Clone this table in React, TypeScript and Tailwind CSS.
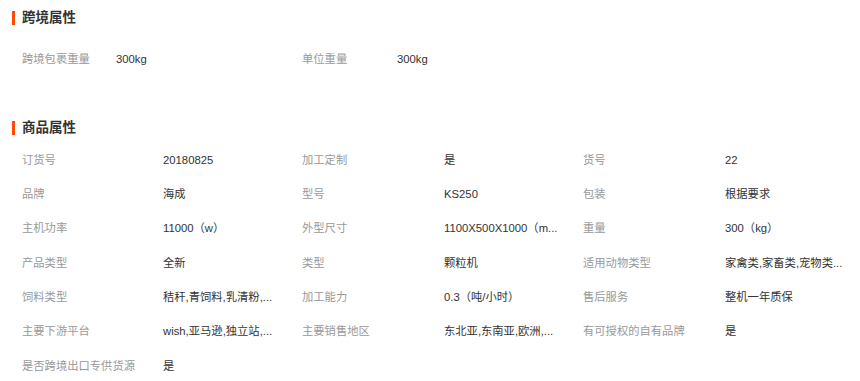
import React from 'react';

type Pair = [string, string];

const crossBorder: Pair[] = [
  ['跨境包裹重量', '300kg'],
  ['单位重量', '300kg'],
];

const attrs: Pair[] = [
  ['订货号', '20180825'],
  ['加工定制', '是'],
  ['货号', '22'],
  ['品牌', '海成'],
  ['型号', 'KS250'],
  ['包装', '根据要求'],
  ['主机功率', '11000（w）'],
  ['外型尺寸', '1100X500X1000（m...'],
  ['重量', '300（kg）'],
  ['产品类型', '全新'],
  ['类型', '颗粒机'],
  ['适用动物类型', '家禽类,家畜类,宠物类...'],
  ['饲料类型', '秸秆,青饲料,乳清粉,...'],
  ['加工能力', '0.3（吨/小时）'],
  ['售后服务', '整机一年质保'],
  ['主要下游平台', 'wish,亚马逊,独立站,...'],
  ['主要销售地区', '东北亚,东南亚,欧洲,...'],
  ['有可授权的自有品牌', '是'],
  ['是否跨境出口专供货源', '是'],
];

const SectionTitle: React.FC<{ title: string }> = ({ title }) => (
  <div className="flex items-center h-[14px] pl-[12px]">
    <span className="w-[3px] h-[14px] bg-[#ff4a00]" />
    <span className="ml-[7px] text-[13.5px] font-bold leading-[14px] text-[#333]">{title}</span>
  </div>
);

export default function App() {
  return (
    <div
      className="w-[860px] h-[381px] bg-white overflow-hidden pt-[11px]"
      style={{ fontFamily: '"Liberation Sans", "Noto Sans CJK SC", sans-serif' }}
    >
      <SectionTitle title="跨境属性" />

      <div className="mt-[17px] pl-[22px] grid grid-cols-[94px_186px_95px_186px] text-[11.3px]">
        {crossBorder.map(([k, v]) => (
          <React.Fragment key={k}>
            <div className="h-[34px] flex items-center text-[#999]">{k}</div>
            <div className="h-[34px] flex items-center text-[#333]">{v}</div>
          </React.Fragment>
        ))}
      </div>

      <div className="mt-[45px]">
        <SectionTitle title="商品属性" />
      </div>

      <div className="mt-[8px] pl-[22px] grid grid-cols-[141px_139px_142px_139px_142px_139px] auto-rows-[34.33px] text-[11.3px]">
        {attrs.map(([k, v]) => (
          <React.Fragment key={k}>
            <div className="flex items-center text-[#999] whitespace-nowrap">{k}</div>
            <div className="flex items-center text-[#333] whitespace-nowrap">{v}</div>
          </React.Fragment>
        ))}
      </div>
    </div>
  );
}
